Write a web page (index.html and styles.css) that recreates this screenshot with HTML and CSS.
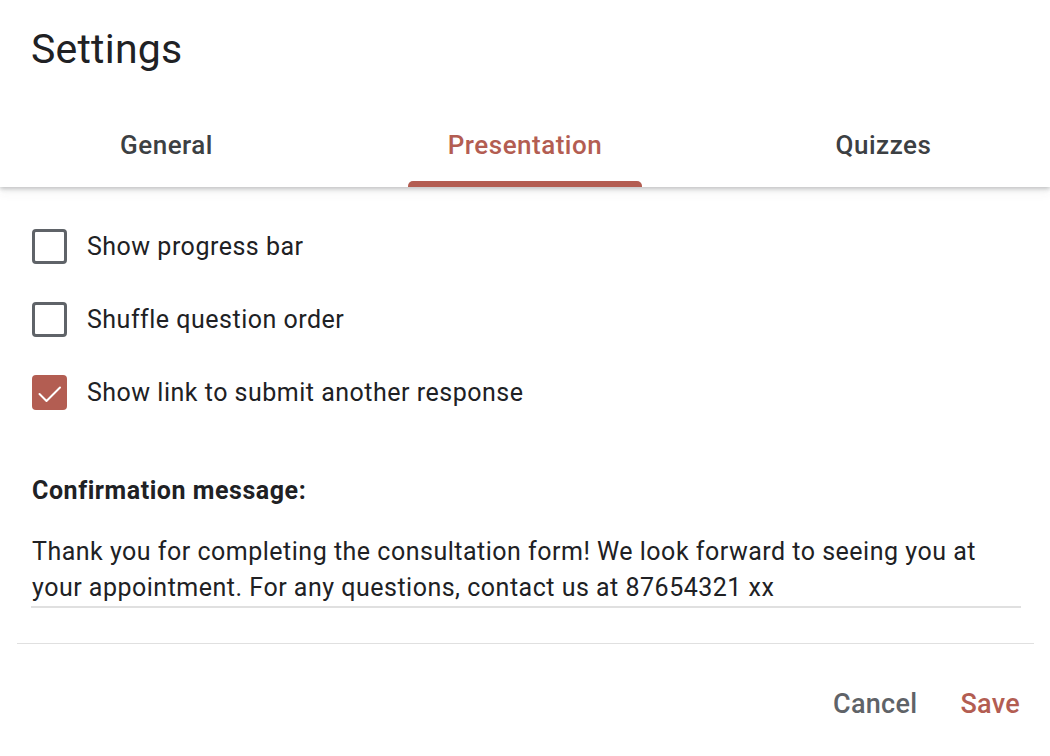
FILE: index.html
```html
<!DOCTYPE html>
<html>
<head>
<meta charset="utf-8">
<link rel="stylesheet" href="styles.css">
</head>
<body>
<div class="dialog">
  <header class="head">
    <h1 class="title">Settings</h1>
    <nav class="tabs">
      <div class="tab">General</div>
      <div class="tab active">Presentation</div>
      <div class="tab">Quizzes</div>
    </nav>
  </header>
  <section class="body">
    <div class="options">
      <label class="opt"><span class="box"></span><span>Show progress bar</span></label>
      <label class="opt"><span class="box"></span><span>Shuffle question order</span></label>
      <label class="opt"><span class="box checked"><svg viewBox="0 0 35 35" width="35" height="35"><path d="M7.5 19 L14.5 26 L28 12.5" fill="none" stroke="#fff" stroke-width="2" stroke-linecap="round" stroke-linejoin="round"/></svg></span><span>Show link to submit another response</span></label>
    </div>
    <div class="confirm">
      <div class="confirm-label">Confirmation message:</div>
      <div class="confirm-text">Thank you for completing the consultation form! We look forward to seeing you at your appointment. For any questions, contact us at 87654321 xx</div>
    </div>
  </section>
  <footer class="foot">
    <button class="btn cancel">Cancel</button>
    <button class="btn save">Save</button>
  </footer>
</div>
</body>
</html>
```

FILE: styles.css
```css
* { box-sizing: border-box; }
html, body { margin: 0; padding: 0; background: #fff; }
body { font-family: Roboto, "Liberation Sans", sans-serif; color: #202124; width: 1050px; height: 756px; overflow: hidden; }
.dialog { display: flex; flex-direction: column; }
.head { position: relative; z-index: 1; background: #fff; box-shadow: 0 2px 4px rgba(60,64,67,0.28), 0 6px 10px rgba(60,64,67,0.06); }
.title { margin: 0; padding: 23px 0 0 31px; font-size: 41px; font-weight: 400; line-height: 52px; letter-spacing: 0.2px; color: #202124; height: 106px; }
.tabs { display: flex; justify-content: center; height: 81px; }
.tab { flex: 0 0 358.5px; display: flex; justify-content: center; align-items: flex-start; padding-top: 23px; font-size: 26px; font-weight: 500; line-height: 32px; color: #3c4043; position: relative; letter-spacing: 0.5px; }
.tab.active { color: #b35d52; }
.tab.active::after { content: ""; position: absolute; left: 50%; bottom: 0; width: 234px; margin-left: -117px; height: 6px; background: #b35d52; border-radius: 5px 5px 0 0; }
.body { padding: 42px 28px 0 32px; }
.options { display: flex; flex-direction: column; gap: 38px; }
.opt { display: flex; align-items: center; gap: 20px; font-size: 25px; letter-spacing: 0.5px; height: 35px; color: #202124; }
.box { width: 35px; height: 35px; border: 3px solid #5f6368; border-radius: 4px; flex: none; display: block; }
.box.checked { border: none; background: #b35d52; }
.box svg { display: block; }
.confirm { padding-top: 66px; }
.confirm-label { font-size: 25px; font-weight: 700; line-height: 30px; letter-spacing: 0.55px; }
.confirm-text { margin-top: 28px; font-size: 25px; letter-spacing: 0.5px; line-height: 36px; padding-bottom: 0; border-bottom: 2px solid #e0e0e0; width: 990px; margin-left: -1px; padding-left: 1px; }
.foot { margin: 35px 16px 0 17px; border-top: 1px solid #e0e0e0; display: flex; justify-content: flex-end; gap: 43px; padding: 44px 14px 0 0; }
.btn { background: none; border: none; padding: 0; font-family: Roboto, "Liberation Sans", sans-serif; font-size: 27px; font-weight: 500; line-height: 32px; letter-spacing: 0.3px; cursor: pointer; }
.cancel { color: #5f6368; }
.save { color: #b35d52; }
```
